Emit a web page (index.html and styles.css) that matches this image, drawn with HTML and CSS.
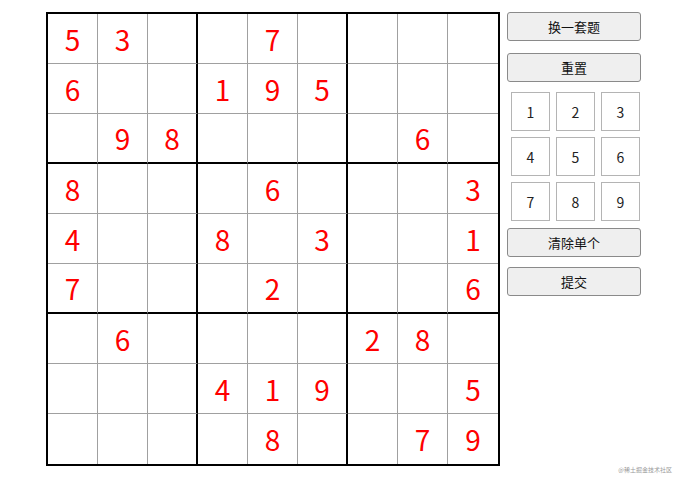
FILE: index.html
```html
<!DOCTYPE html>
<html lang="zh-CN">
<head>
<meta charset="utf-8">
<title>数独</title>
<link rel="stylesheet" href="styles.css">
</head>
<body>
<div class="page">
  <div class="board">
    <div class="cell">5</div><div class="cell">3</div><div class="cell"></div><div class="cell"></div><div class="cell">7</div><div class="cell"></div><div class="cell"></div><div class="cell"></div><div class="cell"></div>
    <div class="cell">6</div><div class="cell"></div><div class="cell"></div><div class="cell">1</div><div class="cell">9</div><div class="cell">5</div><div class="cell"></div><div class="cell"></div><div class="cell"></div>
    <div class="cell"></div><div class="cell">9</div><div class="cell">8</div><div class="cell"></div><div class="cell"></div><div class="cell"></div><div class="cell"></div><div class="cell">6</div><div class="cell"></div>
    <div class="cell">8</div><div class="cell"></div><div class="cell"></div><div class="cell"></div><div class="cell">6</div><div class="cell"></div><div class="cell"></div><div class="cell"></div><div class="cell">3</div>
    <div class="cell">4</div><div class="cell"></div><div class="cell"></div><div class="cell">8</div><div class="cell"></div><div class="cell">3</div><div class="cell"></div><div class="cell"></div><div class="cell">1</div>
    <div class="cell">7</div><div class="cell"></div><div class="cell"></div><div class="cell"></div><div class="cell">2</div><div class="cell"></div><div class="cell"></div><div class="cell"></div><div class="cell">6</div>
    <div class="cell"></div><div class="cell">6</div><div class="cell"></div><div class="cell"></div><div class="cell"></div><div class="cell"></div><div class="cell">2</div><div class="cell">8</div><div class="cell"></div>
    <div class="cell"></div><div class="cell"></div><div class="cell"></div><div class="cell">4</div><div class="cell">1</div><div class="cell">9</div><div class="cell"></div><div class="cell"></div><div class="cell">5</div>
    <div class="cell"></div><div class="cell"></div><div class="cell"></div><div class="cell"></div><div class="cell">8</div><div class="cell"></div><div class="cell"></div><div class="cell">7</div><div class="cell">9</div>
  </div>
  <div class="panel">
    <button class="btn btn-new">换一套题</button>
    <button class="btn btn-reset">重置</button>
    <div class="pad">
      <div class="key">1</div><div class="key">2</div><div class="key">3</div>
      <div class="key">4</div><div class="key">5</div><div class="key">6</div>
      <div class="key">7</div><div class="key">8</div><div class="key">9</div>
    </div>
    <button class="btn btn-clear">清除单个</button>
    <button class="btn btn-submit">提交</button>
  </div>
</div>
<div class="watermark">@稀土掘金技术社区</div>
</body>
</html>
```

FILE: styles.css
```css
html, body {
  margin: 0;
  padding: 0;
  background: #fff;
}
body {
  width: 683px;
  height: 485px;
  position: relative;
  overflow: hidden;
  font-family: "Noto Sans CJK SC", "Noto Sans", sans-serif;
}
.page {
  display: flex;
  align-items: flex-start;
  padding: 12px 0 0 46px;
}
.board {
  display: grid;
  grid-template-columns: repeat(9, 50px);
  grid-auto-rows: 50px;
  border: 2px solid #000;
}
.cell {
  box-sizing: border-box;
  border-right: 1px solid #a0a0a0;
  border-bottom: 1px solid #a0a0a0;
  display: flex;
  align-items: center;
  justify-content: center;
  color: #f00;
  font-size: 28px;
  line-height: 1;
  font-family: "Noto Sans CJK SC", "Noto Sans", sans-serif;
}
.board .cell:nth-child(9n+3),
.board .cell:nth-child(9n+6) {
  border-right: 2px solid #000;
}
.board .cell:nth-child(9n) {
  border-right: none;
}
.board .cell:nth-child(n+19):nth-child(-n+27),
.board .cell:nth-child(n+46):nth-child(-n+54) {
  border-bottom: 2px solid #000;
}
.board .cell:nth-child(n+73) {
  border-bottom: none;
}
.panel {
  display: flex;
  flex-direction: column;
  margin-left: 7px;
  width: 134px;
}
.btn {
  box-sizing: border-box;
  width: 134px;
  height: 29px;
  padding: 0;
  background: #efefef;
  border: 1px solid #8a8a8a;
  border-radius: 3px;
  font-family: "Noto Sans CJK SC", sans-serif;
  font-size: 13px;
  color: #111;
}
.btn-new { margin-bottom: 12px; }
.btn-reset { margin-bottom: 10px; }
.btn-clear { margin-bottom: 10px; }
.pad {
  display: grid;
  grid-template-columns: repeat(3, 39px);
  grid-auto-rows: 39px;
  gap: 6px;
  padding-left: 4px;
  margin-bottom: 7px;
}
.key {
  box-sizing: border-box;
  border: 1px solid #b4b4b4;
  background: #fff;
  display: flex;
  align-items: center;
  justify-content: center;
  font-size: 14px;
  color: #222;
}
.watermark {
  position: absolute;
  right: 11px;
  top: 466px;
  font-size: 6px;
  line-height: 8px;
  color: #9a9a9a;
}
```
